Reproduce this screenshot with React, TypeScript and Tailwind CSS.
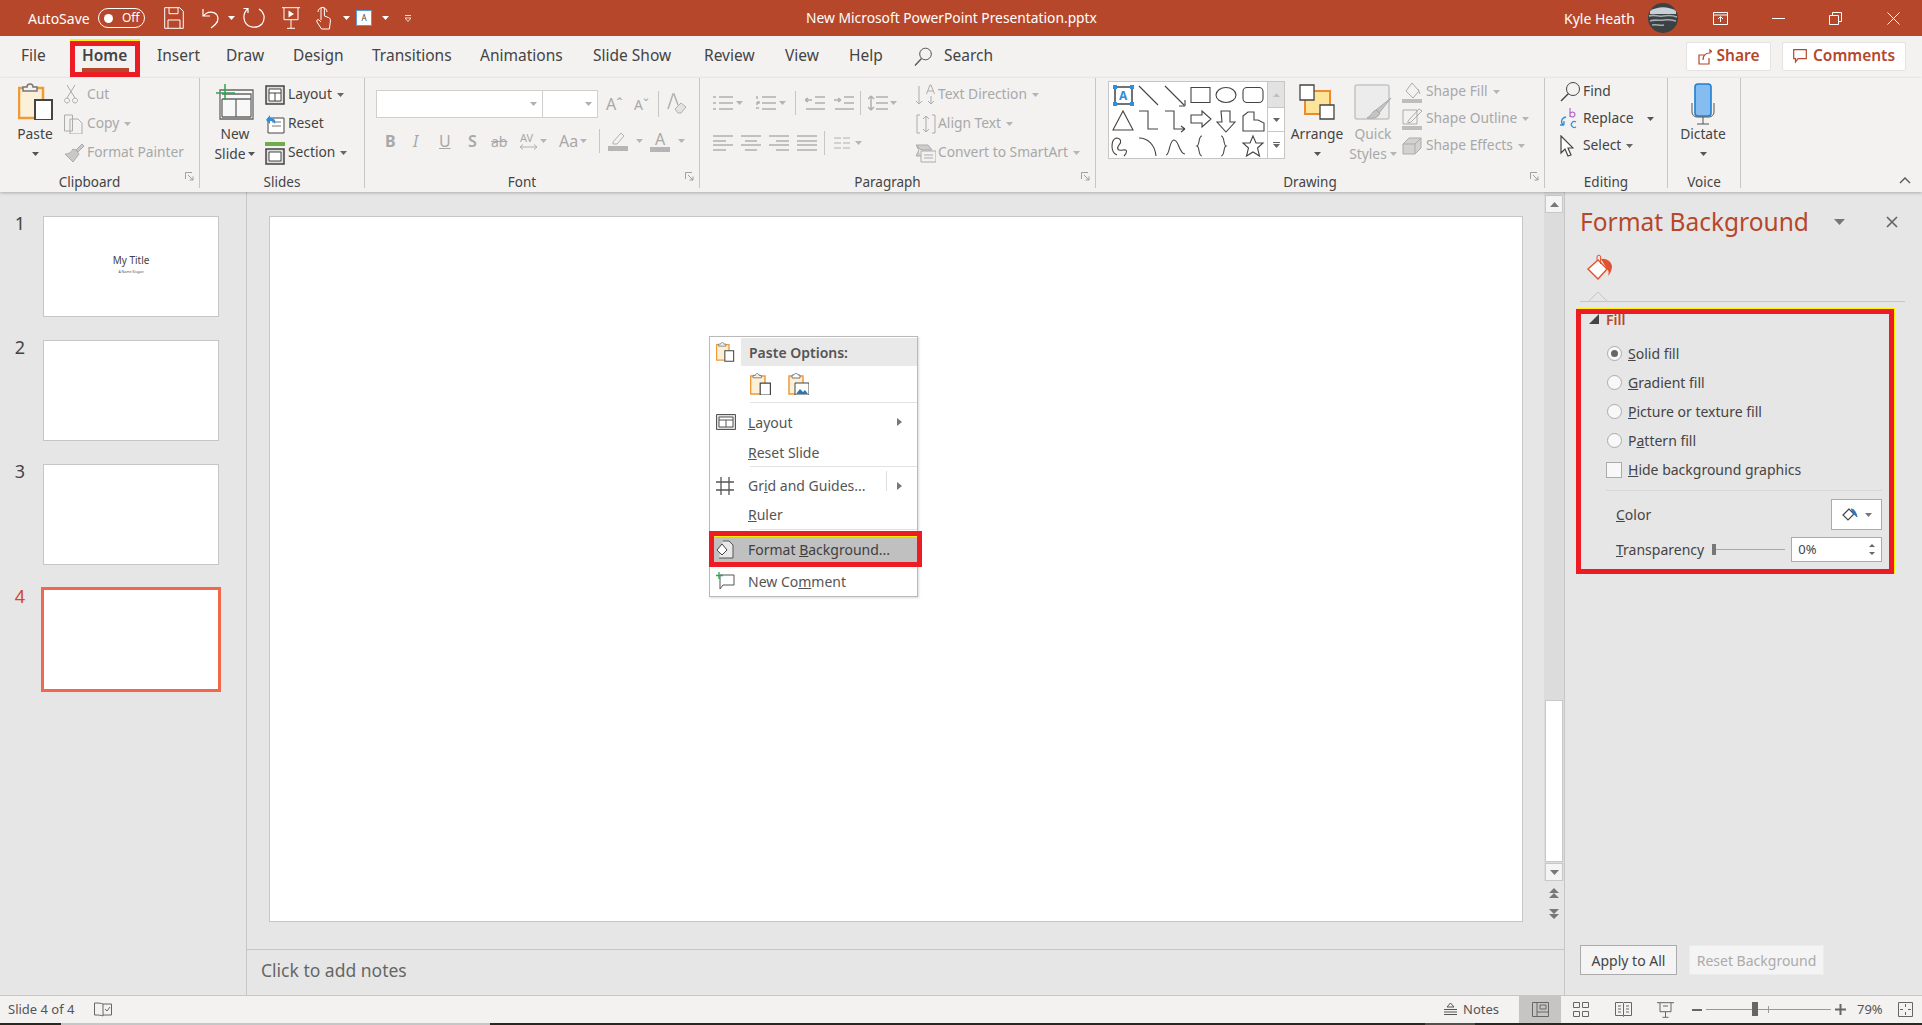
import type { ReactNode } from "react";

const RED = "#b7472a";
const DIM = "#a8a8a8";
const INK = "#444444";

function Ico({ w, h, children, className = "" }: { w: number; h: number; children: ReactNode; className?: string }) {
  return (
    <svg width={w} height={h} viewBox={`0 0 ${w} ${h}`} fill="none" className={`shrink-0 ${className}`}>
      {children}
    </svg>
  );
}

function Caret({ color = "#666666", className = "" }: { color?: string; className?: string }) {
  return (
    <Ico w={7} h={4} className={className}>
      <path d="M0 0h7L3.5 4z" fill={color} />
    </Ico>
  );
}

// =========================
// Title bar
// =========================

function TitleBar() {
  return (
    <div className="flex h-9 shrink-0 items-center bg-[#b7472a] text-[14px] text-white">
      <div className="flex w-[805px] shrink-0 items-center">
        <span className="ml-[28px] w-[70px]">AutoSave</span>
        <div className="flex h-[20px] w-[47px] items-center rounded-full border border-white pl-[5px] text-[12px]">
          <span className="h-[9px] w-[9px] rounded-full bg-white" />
          <span className="ml-[9px]">Off</span>
        </div>
        <Ico w={20} h={22} className="ml-[19px]">
          <path d="M.7.7h15l3.6 3.6v17H.7zM5 .7v6h9v-6M4 21v-8h12v8" stroke="#fff" />
        </Ico>
        <Ico w={20} h={22} className="ml-[18px]">
          <path d="M1 2v7h7M1.500 9C5 4 12 4 15 8c3 5 0 9-6 13" stroke="#fff" strokeWidth="1.2" />
        </Ico>
        <Caret color="#fff" className="ml-[6px]" />
        <Ico w={22} h={24} className="ml-[8px]">
          <path d="M5 2.500C1 6 0 11 2 16c3 6 12 7 17 2 4-6 2-12-3-15M5 7V2.500H.5" stroke="#fff" strokeWidth="1.2" />
        </Ico>
        <Ico w={18} h={22} className="ml-[17px]">
          <path d="M0 .7h18M2 .7v12h14V.7M9 13v8M5 21.300h8" stroke="#fff" />
          <path d="M6.500 3.500 12 7l-5.500 3.500z" fill="#fff" />
        </Ico>
        <Ico w={15} h={24} className="ml-[16px]">
          <path d="M5 14V3a1.700 1.700 0 0 1 3.400 0v7l4 1.500c2 .8 2 2 2 3.500l-1 8H5.500L1 16c-1-2 1-3 2-2l2 2M2 6a4.500 4.500 0 0 1 9 0" stroke="#fff" />
        </Ico>
        <Caret color="#fff" className="ml-[12px]" />
        <span className="ml-[6px] flex h-[16px] w-[16px] items-center justify-center border border-[#5b9bd5] bg-white text-[8px] text-[#444]">A</span>
        <Caret color="#fff" className="ml-[10px]" />
        <Ico w={6} h={7} className="ml-[16px]">
          <path d="M0 .5h6M0 3h6L3 6.500 0 3" stroke="#fff" strokeWidth=".8" />
        </Ico>
      </div>
      <span className="w-[293px] whitespace-nowrap text-center text-[13.800px]">New Microsoft PowerPoint Presentation.pptx</span>
      <span className="ml-[466px] w-[84px] whitespace-nowrap">Kyle Heath</span>
      <Ico w={30} h={30}>
        <circle cx="15" cy="15" r="15" fill="#3c4143" />
        <path d="M2 8c8-5 18-5 26 0v3H2z" fill="#c9d1d6" />
        <path d="M1 13c6-2 8 1 14 0s9-1 14 1M2 18c5-2 9 0 14-1s8 0 12 1M4 22c4-1 8 1 12 0" stroke="#a6adb0" strokeWidth="1.600" />
      </Ico>
      <Ico w={15} h={13} className="ml-[35px]">
        <path d="M.5.500h14v12H.5zM.5 3h14M7.500 10V5M5 7l2.500-2.500L10 7" stroke="#fff" />
      </Ico>
      <span className="ml-[44px] h-px w-[13px] bg-white" />
      <Ico w={13} h={13} className="ml-[44px]">
        <path d="M.5 3.500h9v9h-9zM3.500 3.500v-3h9v9h-3" stroke="#fff" />
      </Ico>
      <Ico w={13} h={13} className="ml-[45px]">
        <path d="M.5.500l12 12M12.500.500l-12 12" stroke="#fff" />
      </Ico>
    </div>
  );
}

// =========================
// Tabs
// =========================

function Tabs() {
  const tabs: [string, number][] = [
    ["File", 21],
    ["Home", 82],
    ["Insert", 157],
    ["Draw", 226],
    ["Design", 293],
    ["Transitions", 372],
    ["Animations", 480],
    ["Slide Show", 593],
    ["Review", 704],
    ["View", 785],
    ["Help", 849],
  ];
  return (
    <div className="flex h-[42px] shrink-0 items-center bg-[#f3f2f1] pb-[2px] text-[15.500px] text-[#444]">
      {tabs.map(([name, x], i) => (
        <span key={name} className={`${name === "Home" ? "relative font-semibold" : ""} shrink-0`} style={{ width: (tabs[i + 1]?.[1] ?? 914) - x, marginLeft: i === 0 ? x : 0 }}>
          {name}
          {name === "Home" && (
            <>
              <span className="absolute left-0 top-[24px] h-[4px] w-[47px] bg-[#b7472a]" />
              <span className="absolute left-[-12px] top-[-3px] h-[36px] w-[70px] border-[5px] border-[#ed1c24] shadow-[0_-2px_0_#fff200]" />
            </>
          )}
        </span>
      ))}
      <Ico w={18} h={20} className="mt-[2px]">
        <circle cx="11.500" cy="7" r="5.800" stroke="#555" />
        <path d="M7.500 11.500 1 18.500" stroke="#555" strokeWidth="1.300" />
      </Ico>
      <span className="ml-[12px]">Search</span>
      <div className="ml-auto flex items-center gap-[11px] pr-[16px] text-[15.500px] font-semibold text-[#b7472a]">
        <div className="flex h-[29px] w-[85px] items-center justify-center gap-[5px] rounded-[2px] border border-[#e4e3e1] bg-white">
          <Ico w={14} h={17}>
            <path d="M11 10v6H1V7h5M5 12c0-5 3-7 7-7V2l1.500 1.500L16 6" stroke={RED} strokeWidth="1.200" />
          </Ico>
          Share
        </div>
        <div className="flex h-[29px] w-[124px] items-center justify-center gap-[6px] rounded-[2px] border border-[#e4e3e1] bg-white">
          <Ico w={14} h={15}>
            <path d="M.7.700h12.600v9H5L2.500 13v-3.300H.7z" stroke={RED} strokeWidth="1.200" />
          </Ico>
          Comments
        </div>
      </div>
    </div>
  );
}

// =========================
// Ribbon pieces
// =========================

function Launcher() {
  return (
    <Ico w={9} h={9} className="absolute bottom-[7px] right-[5px]">
      <path d="M.5 7V.5H7M3 3l5 5M8 4.500V8H4.500" stroke="#8a8a8a" strokeWidth=".8" />
    </Ico>
  );
}

function Group({ w, label, launcher, children }: { w: number; label: string; launcher?: boolean; children: ReactNode }) {
  return (
    <div className="relative flex h-[110px] shrink-0 flex-col border-r border-[#c8c6c4]" style={{ width: w }}>
      <div className="flex h-[95px] shrink-0">{children}</div>
      <div className={`h-[15px] text-center text-[13.500px] leading-[18px] text-[#444] ${launcher ? "pr-[20px]" : ""}`}>{label}</div>
      {launcher && <Launcher />}
    </div>
  );
}

function Row({ icon, label, caret, dim, h = 29, iconW = 23 }: { icon: ReactNode; label: string; caret?: boolean; dim?: boolean; h?: number; iconW?: number }) {
  return (
    <div className="flex items-center whitespace-nowrap" style={{ height: h, color: dim ? DIM : INK }}>
      <span className="flex shrink-0 items-center" style={{ width: iconW }}>
        {icon}
      </span>
      {label}
      {caret && <Caret color={dim ? "#b5b5b5" : "#666"} className="ml-[5px]" />}
    </div>
  );
}

function Big({ icon, lines, caretLine, dim, w, className = "" }: { icon: ReactNode; lines: string[]; caretLine?: boolean; dim?: boolean; w: number; className?: string }) {
  return (
    <div className={`flex shrink-0 flex-col items-center pt-[5px] leading-[20px] ${className}`} style={{ width: w, color: dim ? DIM : INK }}>
      <div className="flex h-[37px] items-center justify-center">{icon}</div>
      <div className="mt-[4px] whitespace-nowrap">{lines[0]}</div>
      <div className="flex h-[20px] items-center whitespace-nowrap">
        {lines[1]}
        {caretLine && <Caret color={dim ? "#b5b5b5" : "#555"} className={lines[1] ? "ml-[3px]" : ""} />}
      </div>
    </div>
  );
}

function PasteIcon({ scale = 1 }: { scale?: number }) {
  return (
    <Ico w={35 * scale} h={37 * scale}>
      <g transform={`scale(${scale})`}>
        <path d="M1 5h24v30H1z" fill="#fdf0d8" stroke="#ed9a3a" strokeWidth="2.500" />
        <path d="M5 8V4h4c0-4 6-4 6 0h4v4z" fill="#f3f2f1" stroke="#777" strokeWidth="1.500" />
        <path d="M17 17h17v20H17z" fill="#fff" stroke="#444" strokeWidth="2" />
      </g>
    </Ico>
  );
}

const glyphLine = "#b0b0b0";

function ParaLines({ d }: { d: string }) {
  return (
    <Ico w={20} h={16}>
      <path d={d} stroke={glyphLine} strokeWidth="1.500" />
    </Ico>
  );
}

function Gallery() {
  return (
    <Ico w={158} h={76}>
      <g stroke="#444" strokeWidth="1.100">
        <path d="M6 5h17v17H6z" stroke="#444" strokeWidth="1.500" />
        <path d="M30 4l19 19M56 4l19 19M76 24h-6M76 24v-6M82 5.500h19v15H82zM107 13a10 7.500 0 1 0 20 0a10 7.500 0 1 0-20 0zM138 5.500h12a4 4 0 0 1 4 4v7a4 4 0 0 1-4 4h-12a4 4 0 0 1-4-4v-7a4 4 0 0 1 4-4z" />
        <path d="M14 29 4 48h20zM30 29h9v18h10M56 29h9v18h11M76 47l-4-3M76 47l-4 3M82 33h11v-4l9 8-9 8v-4H82zM112 29h9v11h5l-9 10-9-10h5zM134 34l5-4h6v8h4l6 3v8h-21z" />
        <path d="M8 73c-7-3-6-15-1-17M7 56c5 0 6 4 3 7-3 4-1 6 4 5s4 3 1 6M30 56c9 0 16 7 17 18M57 73c4 0 3-15 8-15s5 14 11 14M93 54c-4 0-2 9-5 10 3 1 1 10 5 10M112 54c4 0 2 9 5 10-3 1-1 10-5 10M144 54l3 7h7l-5.500 5 2 8-6.500-4-6.500 4 2-8-5.500-5h7z" />
      </g>
      <g fill="#2e8fdc">
        <rect x="4" y="3" width="4" height="4" />
        <rect x="21" y="3" width="4" height="4" />
        <rect x="4" y="20" width="4" height="4" />
        <rect x="21" y="20" width="4" height="4" />
      </g>
      <text x="10" y="18" fontSize="12" fontWeight="700" fill="#2e8fdc">A</text>
    </Ico>
  );
}

function Ribbon() {
  const dimStroke = { stroke: "#ababab" };
  return (
    <div className="relative z-10 flex h-[114px] shrink-0 bg-[#f3f2f1] text-[13.800px] shadow-[0_1px_3px_rgba(0,0,0,0.25)]">
      {/* Clipboard */}
      <Group w={200} label="Clipboard" launcher>
        <Big w={36} className="ml-[17px]" icon={<PasteIcon />} lines={["Paste", ""]} caretLine />
        <div className="ml-[11px] pt-[2px]">
          <Row dim icon={<Ico w={14} h={20}><path d="M3 0l8 13M11 0 3 13M3 13a2.500 2.500 0 1 0 .1 0M11 13a2.500 2.500 0 1 0 .1 0" {...dimStroke} /></Ico>} label="Cut" />
          <Row dim caret icon={<Ico w={20} h={20}><path d="M.5 1h8v16H.5zM6 5h8l4 4v11H6z" {...dimStroke} fill="#f3f2f1" /></Ico>} label="Copy" />
          <Row dim icon={<Ico w={20} h={20}><path d="M12 7l6-6 2 2-6 6zM12 7l3 4-6 8-8-8c3 0 6-1 8-5z" {...dimStroke} fill="#c8c8c8" /></Ico>} label="Format Painter" />
        </div>
      </Group>

      {/* Slides */}
      <Group w={165} label="Slides">
        <Big
          w={60}
          className="ml-[5px]"
          icon={
            <Ico w={38} h={36}>
              <path d="M4 6h33v29H4zM6 10h29v5H6M6 15v18M20 15v18M35 15v18M6 33h29" stroke="#666" strokeWidth="1.300" fill="#f8f8f8" />
              <path d="M9 0v16M0 9h19" stroke="#2ea44f" strokeWidth="1.500" />
            </Ico>
          }
          lines={["New", "Slide"]}
          caretLine
        />
        <div className="pt-[2px]">
          <Row iconW={23} caret icon={<Ico w={20} h={20}><path d="M1 1h18v18H1z" stroke="#444" fill="#ddd" strokeWidth="1.500" /><path d="M4 4h12v12H4zM4 8h12M10 8v8" stroke="#444" fill="#fff" /></Ico>} label="Layout" />
          <Row iconW={23} icon={<Ico w={20} h={20}><path d="M3 4h16v15H3z" stroke="#444" fill="#fff" /><path d="M7 8h9M7 12h9" stroke="#777" /><path d="M1 6l4-5v3c5 0 6 3 5 6-1-2-2-3-5-3v3z" fill="#2e8fdc" /></Ico>} label="Reset" />
          <Row iconW={23} caret icon={<Ico w={20} h={24}><path d="M0 1h20v4H0z" fill="#70ad47" /><path d="M1 8h18v15H1z" stroke="#444" strokeWidth="1.500" fill="#ddd" /><path d="M4 11h12v9H4z" fill="#fff" stroke="#444" /></Ico>} label="Section" />
        </div>
      </Group>

      {/* Font */}
      <Group w={335} label="Font" launcher>
        <div className="pl-[11px] pt-[12px]">
          <div className="flex items-center">
            <div className="flex h-[28px] w-[167px] items-center justify-end border border-[#d0cfcd] bg-white pr-[5px]">
              <Caret color="#b0b0b0" />
            </div>
            <div className="flex h-[28px] w-[55px] items-center justify-end border border-l-0 border-[#d0cfcd] bg-white pr-[5px]">
              <Caret color="#b0b0b0" />
            </div>
            <span className="ml-[8px] w-[28px] text-[16px] text-[#a8a8a8]">Aˆ</span>
            <span className="w-[24px] text-[14px] text-[#a8a8a8]">Aˇ</span>
            <span className="h-[26px] w-px bg-[#c8c6c4]" />
            <Ico w={20} h={22} className="ml-[8px]">
              <path d="M1 16 6 1h1l4 11" stroke={glyphLine} strokeWidth="1.500" />
              <path d="M8 16l6-6 5 4-5 6h-3z" fill="#e3e3e3" stroke={glyphLine} />
            </Ico>
          </div>
          <div className="mt-[10px] flex h-[26px] items-center text-[16px] text-[#a8a8a8]">
            <span className="ml-[9px] w-[28px] font-bold">B</span>
            <span className="w-[26px] italic">I</span>
            <span className="w-[29px] underline">U</span>
            <span className="w-[23px] font-semibold">S</span>
            <span className="w-[29px] text-[14px] line-through">ab</span>
            <span className="flex w-[39px] items-center">
              <span className="flex flex-col text-[11px] leading-[12px]">
                AV
                <Ico w={17} h={6}>
                  <path d="M0 3h17M0 3l3-2.500M0 3l3 2.500M17 3l-3-2.500M17 3l-3 2.500" stroke={glyphLine} />
                </Ico>
              </span>
              <Caret color="#b5b5b5" className="ml-[3px]" />
            </span>
            <span className="flex w-[40px] items-center">Aa<Caret color="#b5b5b5" className="ml-[2px]" /></span>
            <span className="h-[24px] w-px bg-[#c8c6c4]" />
            <Ico w={20} h={20} className="ml-[8px]">
              <path d="M5 11 13 2l3 3-7 8H5z" stroke={glyphLine} />
              <path d="M0 15h20v5H0z" fill="#b5b5b5" />
            </Ico>
            <Caret color="#b5b5b5" className="ml-[8px]" />
            <span className="ml-[7px] flex w-[20px] flex-col items-center leading-[16px]">A<span className="h-[5px] w-[20px] bg-[#b5b5b5]" /></span>
            <Caret color="#b5b5b5" className="ml-[8px]" />
          </div>
        </div>
      </Group>

      {/* Paragraph */}
      <Group w={396} label="Paragraph" launcher>
        <div className="pl-[13px] pt-[13px]">
          <div className="flex h-[24px] items-center">
            <ParaLines d="M0 2h3M0 8h3M0 14h3M6 2h14M6 8h14M6 14h14" />
            <Caret color="#b5b5b5" className="ml-[3px]" />
            <span className="w-[13px]" />
            <ParaLines d="M1 1v3M1 7h2v1H1v2M0 13h3M6 2h14M6 8h14M6 14h14" />
            <Caret color="#b5b5b5" className="ml-[3px]" />
            <span className="ml-[9px] h-[24px] w-px bg-[#c8c6c4]" />
            <span className="ml-[9px]"><ParaLines d="M10 2h10M10 8h10M1 14h19M0 5h7M0 5l3-2M0 5l3 2" /></span>
            <span className="ml-[9px]"><ParaLines d="M10 2h10M10 8h10M1 14h19M0 5h7M7 5 4 3M7 5 4 7" /></span>
            <span className="ml-[6px] h-[24px] w-px bg-[#c8c6c4]" />
            <span className="ml-[7px]"><ParaLines d="M8 2h12M8 8h12M8 14h12M3 1v14M3 1 0 4M3 1l3 3M3 15l-3-3M3 15l3-3" /></span>
            <Caret color="#b5b5b5" className="ml-[2px]" />
          </div>
          <div className="mt-[16px] flex h-[24px] items-center gap-[8px]">
            <ParaLines d="M0 1h20M0 6h13M0 10h20M0 15h13" />
            <ParaLines d="M0 1h20M4 6h12M0 10h20M4 15h12" />
            <ParaLines d="M0 1h20M7 6h13M0 10h20M7 15h13" />
            <ParaLines d="M0 1h20M0 6h20M0 10h20M0 15h20" />
            <span className="ml-[-1px] h-[24px] w-px bg-[#c8c6c4]" />
            <Ico w={16} h={12} className="ml-[1px]">
              <path d="M0 1h7M0 6h7M0 11h7M9 1h7M9 6h7M9 11h7" stroke={glyphLine} strokeWidth="1.200" />
            </Ico>
            <Caret color="#b5b5b5" className="-ml-[3px]" />
          </div>
        </div>
        <div className="ml-[19px] pt-[2px]">
          <Row dim caret iconW={22} icon={<Ico w={19} h={22}><path d="M3 2v18M3 20 0 17M3 20l3-3M15 12v8M15 20l-3-3M15 20l3-3M10.500 10 14 1h1l3.500 9M12 7h5" {...dimStroke} /></Ico>} label="Text Direction" />
          <Row dim caret iconW={22} icon={<Ico w={20} h={20}><path d="M4 1H1v18h3M16 1h3v18h-3M10 2v16M10 2 7 5M10 2l3 3M10 18l-3-3M10 18l3-3" {...dimStroke} /></Ico>} label="Align Text" />
          <Row dim caret iconW={22} icon={<Ico w={20} h={20}><path d="M0 2h12l4 5H5zM0 2l3 5-3 6h5" {...dimStroke} fill="#ccc" /><path d="M5 8h15v11H5zM8 12h9M8 15h9" {...dimStroke} fill="#f3f2f1" /></Ico>} label="Convert to SmartArt" />
        </div>
      </Group>

      {/* Drawing */}
      <Group w={449} label="Drawing" launcher>
        <div className="ml-[12px] mt-[3px] flex h-[78px] w-[177px] border border-[#c8c6c4] bg-white">
          <Gallery />
          <div className="flex w-[18px] flex-col border-l border-[#c8c6c4]">
            <span className="flex h-[25px] items-center justify-center bg-[#e2e2e2]"><Ico w={7} h={4}><path d="M0 4h7L3.500 0z" fill="#c0c0c0" /></Ico></span>
            <span className="flex h-[25px] items-center justify-center border-y border-[#c8c6c4]"><Caret color="#666" /></span>
            <span className="flex flex-1 flex-col items-center justify-center gap-[1px]"><span className="h-px w-[7px] bg-[#666]" /><Caret color="#666" /></span>
          </div>
        </div>
        <Big
          w={54}
          className="ml-[5px]"
          icon={
            <Ico w={36} h={36}>
              <path d="M6 7h25v23H6z" fill="#fde49b" stroke="#ed8a2d" strokeWidth="2" />
              <path d="M1 1h14v15H1zM21 21h14v14H21z" fill="#fff" stroke="#444" strokeWidth="1.300" />
            </Ico>
          }
          lines={["Arrange", ""]}
          caretLine
        />
        <Big
          w={58}
          dim
          icon={
            <Ico w={38} h={36}>
              <path d="M3 1h30a2 2 0 0 1 2 2v30a2 2 0 0 1-2 2H3a2 2 0 0 1-2-2V3a2 2 0 0 1 2-2z" fill="#ececec" stroke="#c4c4c4" strokeWidth="1.500" />
              <path d="M37 14 25 29l-3-3zM22 26c-4 1-4 6-9 8 6 1 11 0 13-5z" fill="#c4c4c4" stroke="#aaa" />
            </Ico>
          }
          lines={["Quick", "Styles"]}
          caretLine
        />
        <div>
          <Row dim caret h={27} iconW={24} icon={<Ico w={20} h={22}><path d="M10 2l7 8-6 7-7-7zM16 8l2 5" {...dimStroke} /><path d="M0 18h20v4H0z" fill="#bdbdbd" /></Ico>} label="Shape Fill" />
          <Row dim caret h={27} iconW={24} icon={<Ico w={20} h={22}><path d="M1 2h14v14H1zM6 13l11-12 3 2L9 14l-3 1z" {...dimStroke} /><path d="M0 18h20v4H0z" fill="#bdbdbd" /></Ico>} label="Shape Outline" />
          <Row dim caret h={27} iconW={24} icon={<Ico w={20} h={20}><path d="M7 2h12v10l-6 6H1V8z" {...dimStroke} fill="#d2d2d2" /><path d="M1 8h12v10M13 8l6-6" {...dimStroke} /></Ico>} label="Shape Effects" />
        </div>
      </Group>

      {/* Editing */}
      <Group w={123} label="Editing">
        <div className="ml-[15px]">
          <Row h={27} iconW={23} icon={<Ico w={20} h={22}><circle cx="13" cy="8" r="6.500" stroke="#444" /><path d="M8.500 12.500 1 20" stroke="#444" strokeWidth="1.500" /></Ico>} label="Find" />
          <div className="flex h-[27px] items-center text-[#444]">
            <span className="flex w-[23px] items-center">
              <Ico w={19} h={22}>
                <path d="M6 9C1 10 0 15 4 17M4 17v-4M4 17H0" stroke="#2e8fdc" strokeWidth="1.300" />
                <path d="M10 0v9M10 6a2.500 2.500 0 1 1 0 1" stroke="#b05cc6" strokeWidth="1.100" />
                <path d="M16 14a3 3 0 1 0 0 5" stroke="#2e8fdc" strokeWidth="1.200" />
              </Ico>
            </span>
            Replace
            <Caret color="#555" className="ml-[13px]" />
          </div>
          <Row h={27} iconW={23} caret icon={<Ico w={14} h={22}><path d="M1 1l12 12H8l3 7-3 1-3-7-4 4z" stroke="#444" strokeWidth="1.200" fill="#fff" /></Ico>} label="Select" />
        </div>
      </Group>

      {/* Voice */}
      <Group w={73} label="Voice">
        <Big
          w={70}
          icon={
            <Ico w={24} h={42} className="mt-[4px]">
              <rect x="4" y="1" width="16" height="32" rx="3" fill="#85bdf0" stroke="#1f7fd1" strokeWidth="1.600" />
              <path d="M1 20v9a5 5 0 0 0 5 5h12a5 5 0 0 0 5-5v-9M12 34v7M6 41h12" stroke="#555" />
            </Ico>
          }
          lines={["Dictate", ""]}
          caretLine
        />
      </Group>

      <Ico w={12} h={7} className="ml-[158px] mt-[99px]">
        <path d="M1 6l5-5 5 5" stroke="#555" strokeWidth="1.400" />
      </Ico>
    </div>
  );
}

// =========================
// Slides column
// =========================

function Thumbs() {
  return (
    <div className="w-[247px] shrink-0 border-r border-[#c6c6c6] pt-[24px]">
      {[1, 2, 3].map((n) => (
        <div key={n} className="mb-[23px] flex items-start">
          <span className="w-[43px] pr-[3px] text-center text-[18px] leading-[14px] text-[#444]">{n}</span>
          <div className="flex h-[101px] w-[176px] flex-col items-center border border-[#c6c6c6] bg-white pt-[37px]">
            {n === 1 && (
              <>
                <span className="text-[10px] leading-[12px] text-[#444]">My Title</span>
                <span className="mt-[3px] text-[3.500px] leading-[5px] text-[#555]">A Name Slogan</span>
              </>
            )}
          </div>
        </div>
      ))}
      <div className="-mt-[1px] flex items-start">
        <span className="w-[41px] pr-[1px] pt-[2px] text-center text-[18px] leading-[14px] text-[#d0492b]">4</span>
        <div className="h-[105px] w-[180px] border-[3px] border-[#f0694a] bg-white" />
      </div>
    </div>
  );
}

function MenuRow({ label, arrow, sep, icon, h }: { label: ReactNode; arrow?: boolean; sep?: boolean; icon?: ReactNode; h: number }) {
  return (
    <div className="relative flex items-center text-[#555]" style={{ height: h }}>
      <span className="flex w-[38px] shrink-0 pl-[6px]">{icon}</span>
      <span className="whitespace-nowrap">{label}</span>
      {sep && <span className="absolute right-[30px] top-[4px] h-[20px] w-px bg-[#ddd]" />}
      {arrow && (
        <Ico w={5} h={8} className="absolute right-[15px] top-1/2 -translate-y-1/2">
          <path d="M0 0l5 4-5 4z" fill="#777" />
        </Ico>
      )}
    </div>
  );
}

function ContextMenu() {
  return (
    <div className="absolute left-[439px] top-[119px] w-[209px] border border-[#b9b9b9] bg-white text-[14px] shadow-[1px_1px_2px_rgba(0,0,0,0.15)]">
      <div className="mt-px flex h-[28px] items-center">
        <span className="flex w-[31px] justify-center"><PasteIcon scale={0.52} /></span>
        <span className="flex h-full flex-1 items-center bg-[#e9e9e9] pl-[8px] font-semibold text-[#555]">Paste Options:</span>
      </div>
      <div className="flex h-[36px] items-center gap-[17px] pl-[40px]">
        <PasteIcon scale={0.6} />
        <Ico w={21} h={22}>
          <path d="M1 3h14v18H1z" fill="#fdf0d8" stroke="#ed9a3a" strokeWidth="1.500" />
          <path d="M4 5V2h2c0-2 4-2 4 0h2v3z" fill="#fff" stroke="#777" />
          <path d="M7 10h14v12H7z" fill="#fff" stroke="#444" />
          <path d="M8 21l4-5 3 3 2-2 3 4z" fill="#2e75b6" />
        </Ico>
      </div>
      <div className="ml-[40px] h-px bg-[#e2e2e2]" />
      <MenuRow h={38} label={<><u>L</u>ayout</>} arrow icon={<Ico w={20} h={16}><path d="M.5.500h19v15H.5z" fill="#ddd" stroke="#555" /><path d="M3 3h14v10H3zM3 6h14M10 6v7" fill="#fff" stroke="#555" /></Ico>} />
      <MenuRow h={23} label={<><u>R</u>eset Slide</>} />
      <div className="ml-[40px] mt-[2px] h-px bg-[#e2e2e2]" />
      <MenuRow h={37} label={<>Gr<u>i</u>d and Guides...</>} arrow sep icon={<Ico w={18} h={18}><path d="M5 0v18M13 0v18M0 5h18M0 13h18" stroke="#555" strokeWidth="1.300" /></Ico>} />
      <MenuRow h={21} label={<><u>R</u>uler</>} />
      <div className="ml-[40px] mt-[4px] h-px bg-[#e2e2e2]" />
      <div className="relative mt-[6px] flex h-[27px] items-center bg-[#c0c0c0] text-[#3f3f3f]">
        <span className="flex w-[38px] shrink-0 pl-[6px]">
          <Ico w={18} h={19}>
            <path d="M7 1h6l4 4v13H3" stroke="#555" fill="#e8e8e8" />
            <path d="M6 4 1 10l5 5 5-5z" fill="#fff" stroke="#444" />
          </Ico>
        </span>
        <span className="whitespace-nowrap">Format <u>B</u>ackground...</span>
        <span className="absolute -top-[5px] left-[-1px] h-[36px] w-[213px] border-[5px] border-[#ed1c24]">
          <span className="block h-px bg-[#fff200]" />
        </span>
      </div>
      <div className="pt-[3px]">
        <MenuRow h={30} label={<>New Co<u>m</u>ment</>} icon={<Ico w={19} h={18}><path d="M4 3h14v10H7l-3 4z" stroke="#555" /><path d="M3 0v7M0 3.500h7" stroke="#2ea44f" strokeWidth="1.300" /></Ico>} />
      </div>
    </div>
  );
}

function ScrollBtn({ d }: { d: string }) {
  return (
    <div className="flex h-[18px] w-[18px] items-center justify-center border border-[#c8c8c8] bg-[#f4f4f4]">
      <Ico w={9} h={5}><path d={d} fill="#777" /></Ico>
    </div>
  );
}

function Scrollbar() {
  return (
    <div className="flex w-[20px] shrink-0 flex-col items-center">
      <div className="flex h-[689px] w-full flex-col items-center bg-[#dcdcdc] pt-[3px]">
        <ScrollBtn d="M0 5h9L4.500 0z" />
        <div className="mt-[487px] h-[162px] w-[18px] border border-[#c8c8c8] bg-white" />
        <div className="mt-px">
          <ScrollBtn d="M0 0h9L4.500 5z" />
        </div>
      </div>
      <Ico w={10} h={11} className="mt-[7px]">
        <path d="M5 0l5 5H0zM5 5l5 5H0z" fill="#777" />
      </Ico>
      <Ico w={10} h={11} className="mt-[9px]">
        <path d="M5 11 0 6h10zM5 6 0 1h10z" fill="#777" />
      </Ico>
    </div>
  );
}

// =========================
// Format panel
// =========================

function Radio({ on, label }: { on?: boolean; label: ReactNode }) {
  return (
    <div className="flex h-[29px] items-center pl-[26px]">
      <span className="flex h-[15px] w-[15px] items-center justify-center rounded-full border border-[#ababab] bg-[#f8f8f8]">
        {on && <span className="h-[7px] w-[7px] rounded-full bg-[#666]" />}
      </span>
      <span className="ml-[6px]">{label}</span>
    </div>
  );
}

function FormatPanel() {
  return (
    <div className="flex w-[358px] shrink-0 flex-col border-l border-[#c6c6c6] pb-[20px] text-[14px] text-[#444]">
      <div className="mt-[12px] flex h-[36px] items-center pl-[15px]">
        <span className="text-[24.500px] leading-[36px] text-[#b7472a]">Format Background</span>
        <Ico w={11} h={6} className="ml-[25px]"><path d="M0 0h11L5.500 6z" fill="#777" /></Ico>
        <Ico w={12} h={12} className="ml-[41px]"><path d="M1 1l10 10M11 1 1 11" stroke="#666" strokeWidth="1.700" /></Ico>
      </div>
      <div className="mt-[14px] h-[47px] pl-[21px]">
        <Ico w={27} h={26}>
          <path d="M12 6 2 15l10 10 9-10z" fill="#fff" stroke="#e0512f" strokeWidth="1.400" />
          <path d="M11 6V3a1.800 1.800 0 0 1 3.600 0v7" stroke="#e0512f" />
          <path d="M15 5c5-1 10 2 11 7 0 4-2 8-4 10 1-3 1-5-1-7z" fill="#e0512f" />
        </Ico>
      </div>
      <div className="relative ml-[15px] mr-[17px] h-px bg-[#c6c6c6]">
        <Ico w={18} h={10} className="absolute left-[9px] -top-[10px]">
          <path d="M0 10 9 1l9 9" stroke="#c6c6c6" fill="#e6e6e6" />
        </Ico>
      </div>
      <div className="ml-[11px] mt-[7px] h-[265px] w-[318px] overflow-hidden border-[5px] border-[#ed1c24] shadow-[1px_-1px_0_#fff200]">
        <div className="-mt-[5px] flex h-[20px] items-center pl-[8px] font-semibold text-[#b7472a]">
          <Ico w={10} h={10}><path d="M10 0v10H0z" fill="#444" /></Ico>
          <span className="ml-[7px]">Fill</span>
        </div>
        <div className="mt-[10px]">
          <Radio on label={<><u>S</u>olid fill</>} />
          <Radio label={<><u>G</u>radient fill</>} />
          <Radio label={<><u>P</u>icture or texture fill</>} />
          <Radio label={<>P<u>a</u>ttern fill</>} />
          <div className="flex h-[29px] items-center pl-[25px]">
            <span className="h-[16px] w-[16px] border border-[#ababab] bg-[#f8f8f8]" />
            <span className="ml-[6px]"><u>H</u>ide background graphics</span>
          </div>
        </div>
        <div className="ml-[25px] mr-[7px] mt-[6px] h-px bg-[#d8d8d8]" />
        <div className="mr-[7px] mt-[8px] flex h-[31px] items-center justify-between pl-[35px]">
          <span><u>C</u>olor</span>
          <div className="flex h-full w-[51px] items-center justify-center gap-[7px] border border-[#ababab] bg-white">
            <Ico w={16} h={14}>
              <path d="M7 1 1 7l5 5 6-6z" stroke="#444" strokeWidth="1.200" />
              <path d="M9 1c3 0 5 3 6 8-2-2-3-3-4-3" fill="#2e75b6" stroke="#2e75b6" />
            </Ico>
            <Caret color="#777" />
          </div>
        </div>
        <div className="mr-[7px] mt-[7px] flex h-[25px] items-center pl-[35px]">
          <span className="w-[96px]"><u>T</u>ransparency</span>
          <span className="h-[11px] w-[4px] bg-[#777]" />
          <span className="h-px w-[70px] bg-[#a8a8a8]" />
          <div className="ml-[6px] flex h-full w-[91px] items-center justify-between border border-[#ababab] bg-white pl-[6px] pr-[6px] text-[13px]">
            0%
            <span className="flex flex-col gap-[5px]">
              <Ico w={6} h={3}><path d="M0 3h6L3 0z" fill="#666" /></Ico>
              <Ico w={6} h={3}><path d="M0 0h6L3 3z" fill="#666" /></Ico>
            </span>
          </div>
        </div>
      </div>
      <div className="mt-auto flex gap-[12px] pl-[15px]">
        <div className="flex h-[30px] w-[97px] items-center justify-center border border-[#ababab] bg-[#f4f4f4]">Apply to All</div>
        <div className="flex h-[30px] w-[135px] items-center justify-center border border-[#ececec] bg-[#f4f4f4] text-[#ababab]">Reset Background</div>
      </div>
    </div>
  );
}

// =========================
// Status bar
// =========================

function StatusBar() {
  return (
    <div className="flex h-7 shrink-0 items-center border-t border-[#c6c6c6] bg-[#f3f2f1] text-[13px] text-[#555]">
      <span className="ml-[8px] w-[86px]">Slide 4 of 4</span>
      <Ico w={18} h={15}>
        <path d="M9 2C7 1 4 1 .5 1v12c4 0 6 0 8.500 1M9 2h8.500v11H9M9 2v12" stroke="#666" />
        <path d="M11 7l2 2 3-4" stroke="#666" />
      </Ico>
      <Ico w={13} h={13} className="ml-[1332px]">
        <path d="M3 4h7L6.500 0zM0 6.500h13M0 9h13M0 11.500h13" stroke="#555" />
      </Ico>
      <span className="ml-[6px] w-[56px]">Notes</span>
      <div className="flex h-full w-[42px] items-center justify-center bg-[#c6c5c3]">
        <Ico w={17} h={15}>
          <path d="M.5.500h16v14H.5zM5 .500v14M5 10h11.500M8 3h6v4H8z" stroke="#666" />
        </Ico>
      </div>
      <Ico w={16} h={15} className="ml-[12px]">
        <path d="M.5.500h6v5h-6zM9.500.500h6v5h-6zM.5 9.500h6v5h-6zM9.500 9.500h6v5h-6z" stroke="#666" />
      </Ico>
      <Ico w={17} h={15} className="ml-[26px]">
        <path d="M.5.500h7.500l.5 1 .5-1h7.500v13H9l-.5 1-.5-1H.5zM8.500 1.500v12M3 4h3M3 7h3M3 10h3M11 4h3M11 7h3M11 10h3" stroke="#666" />
      </Ico>
      <Ico w={17} h={16} className="ml-[25px]">
        <path d="M0 .7h17M3 .7v9h11v-9M8.500 10v5M5.500 15.300h6M6 4h5" stroke="#666" />
      </Ico>
      <span className="ml-[18px] h-[2px] w-[10px] bg-[#666]" />
      <div className="relative ml-[4px] h-px w-[125px] bg-[#999]">
        <span className="absolute left-[46px] -top-[7px] h-[14px] w-[6px] bg-[#666]" />
        <span className="absolute left-[62px] -top-[3px] h-[7px] w-px bg-[#999]" />
      </div>
      <Ico w={11} h={11} className="ml-[4px]">
        <path d="M5.500 0v11M0 5.500h11" stroke="#666" strokeWidth="2" />
      </Ico>
      <span className="ml-[11px] w-[41px]">79%</span>
      <Ico w={15} h={15}>
        <path d="M.5.500h14v14H.5zM7.500 2v3M7.500 10v3M2 7.500h3M10 7.500h3" stroke="#666" />
      </Ico>
    </div>
  );
}

export default function App() {
  return (
    <div className="flex h-[1025px] w-[1922px] flex-col overflow-hidden bg-[#e6e6e6] font-['Noto_Sans',sans-serif]">
      <TitleBar />
      <Tabs />
      <Ribbon />
      <div className="flex min-h-0 flex-1">
        <Thumbs />
        <div className="flex min-w-0 flex-1 flex-col">
          <div className="flex flex-1">
            <div className="flex-1 pl-[22px] pt-[24px]">
              <div className="relative h-[706px] w-[1254px] border border-[#c6c6c6] bg-white">
                <ContextMenu />
              </div>
            </div>
            <Scrollbar />
          </div>
          <div className="flex h-[46px] shrink-0 items-center border-t border-[#c6c6c6] pb-[4px] pl-[14px] text-[17.500px] text-[#666]">Click to add notes</div>
        </div>
        <FormatPanel />
      </div>
      <StatusBar />
      <div className="flex h-[2px] shrink-0 bg-[#2a2620]">
        <span className="ml-[61px] h-full w-[429px] bg-[#c6c6c6]" />
        <span className="ml-[935px] h-full w-[50px] bg-[#55504a]" />
      </div>
    </div>
  );
}
